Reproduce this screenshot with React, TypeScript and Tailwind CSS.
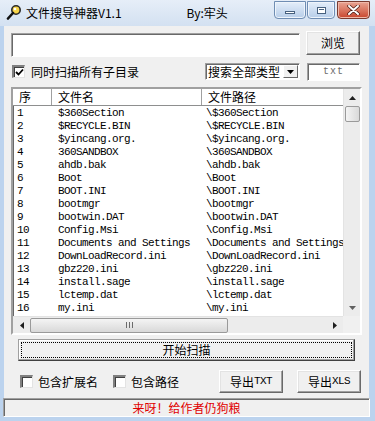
import React from "react";

const CJK = "font-['Microsoft_YaHei','Noto_Sans_CJK_SC',sans-serif]";
const MONO = "font-['Liberation_Mono','Noto_Sans_CJK_SC',monospace]";

const FILES = [
  "$360Section",
  "$RECYCLE.BIN",
  "$yincang.org.",
  "360SANDBOX",
  "ahdb.bak",
  "Boot",
  "BOOT.INI",
  "bootmgr",
  "bootwin.DAT",
  "Config.Msi",
  "Documents and Settings",
  "DownLoadRecord.ini",
  "gbz220.ini",
  "install.sage",
  "lctemp.dat",
  "my.ini",
  "System Volume(2).?",
];

// classic raised 3d button
const Btn = ({ children, className = "" }: { children: React.ReactNode; className?: string }) => (
  <div
    className={`flex items-center justify-center bg-[#f0f0f0] border border-t-white border-l-white border-r-[#696969] border-b-[#696969] shadow-[inset_-1px_-1px_0_#a0a0a0,inset_1px_1px_0_#e3e3e3] text-[12px] text-black ${CJK} ${className}`}
  >
    {children}
  </div>
);

const Check = ({ checked }: { checked?: boolean }) => (
  <div className="w-[13px] h-[13px] bg-white border-t-2 border-l-2 border-b border-r border-t-[#808080] border-l-[#808080] border-b-[#e3e3e3] border-r-[#e3e3e3] shadow-[inset_1px_1px_0_#404040] flex items-center justify-center">
    {checked && (
      <svg width="9" height="9" viewBox="0 0 9 9">
        <path d="M1 4 L3.5 6.5 L8 1.5" stroke="#000" strokeWidth="1.8" fill="none" />
      </svg>
    )}
  </div>
);

const Sunken = ({ children, className = "" }: { children?: React.ReactNode; className?: string }) => (
  <div
    className={`border-t border-l border-b border-r border-t-[#a0a0a0] border-l-[#a0a0a0] border-b-white border-r-white shadow-[inset_1px_1px_0_#696969] ${className}`}
  >
    {children}
  </div>
);

const TitleButtons = () => (
  <div className="ml-auto flex items-start mt-[1px] mr-[5px]">
    <div className="w-[32px] h-[18px] rounded-b-[4px] border border-[#6f8db3] bg-gradient-to-b from-[#e4eefa] to-[#b7cde8] flex items-center justify-center shadow-[inset_0_0_0_1px_#eef4fb]">
      <div className="w-[10px] h-[3px] bg-white border border-[#47617f] mt-[4px]" />
    </div>
    <div className="w-[28px] h-[18px] ml-[1px] rounded-b-[4px] border border-[#6f8db3] bg-gradient-to-b from-[#e4eefa] to-[#b7cde8] flex items-center justify-center shadow-[inset_0_0_0_1px_#eef4fb]">
      <div className="w-[9px] h-[7px] bg-white border border-[#47617f] flex items-center justify-center">
        <div className="w-[5px] h-[3px] border-t border-[#47617f]" />
      </div>
    </div>
    <div className="w-[33px] h-[18px] ml-[2px] rounded-b-[4px] border border-[#7a3b30] bg-gradient-to-b from-[#e8a493] to-[#c8442c] flex items-center justify-center shadow-[inset_0_0_0_1px_#f0b9aa]">
      <svg width="13" height="10" viewBox="0 0 13 10">
        <path d="M2 1 L11 9 M11 1 L2 9" stroke="#4a1a12" strokeWidth="3.4" strokeLinecap="round" />
        <path d="M2 1 L11 9 M11 1 L2 9" stroke="#fff" strokeWidth="2" strokeLinecap="round" />
      </svg>
    </div>
  </div>
);

const ListView = () => (
  <div className="mt-[7px] ml-[7px] w-[351px] h-[249px] border-2 border-t-[#a0a0a0] border-l-[#a0a0a0] border-b-white border-r-white shadow-[inset_1px_1px_0_#696969] bg-white flex flex-col overflow-hidden">
    <div className="flex flex-1 min-h-0">
      <div className="flex-1 overflow-hidden flex flex-col">
        {/* header */}
        <div className={`flex h-[17px] shrink-0 border-b border-[#8e8f8f] bg-white text-[12px] leading-[16px] text-black ${CJK}`}>
          <div className="w-[39px] shrink-0 pl-[6px] border-r border-[#a0a0a0]">序</div>
          <div className="w-[150px] shrink-0 pl-[6px] border-r border-[#a0a0a0]">文件名</div>
          <div className="w-[150px] shrink-0 pl-[6px]">文件路径</div>
        </div>
        <div className={`pt-[1px] text-[11px] tracking-[-0.6px] text-black ${MONO}`}>
          {FILES.map((f, i) => (
            <div key={i} className="flex h-[13px] leading-[13px] whitespace-nowrap">
              <div className="w-[39px] shrink-0 pl-[4px]">{i + 1}</div>
              <div className="w-[150px] shrink-0 pl-[6px]">{f}</div>
              <div className="shrink-0 pl-[4px]">\{f}</div>
            </div>
          ))}
        </div>
      </div>
      {/* vertical scrollbar */}
      <div className="w-[17px] shrink-0 bg-[#ececec] flex flex-col items-center border-l border-[#e3e3e3]">
        <div className="h-[17px] flex items-center justify-center">
          <svg width="7" height="4" viewBox="0 0 7 4"><path d="M0 4 L3.5 0 L7 4 Z" fill="#1e1e1e" /></svg>
        </div>
        <div className="w-[15px] h-[16px] rounded-[2px] border border-[#9a9a9a] bg-gradient-to-r from-[#f4f4f4] to-[#d9d9d9]" />
        <div className="flex-1" />
        <div className="h-[17px] flex items-center justify-center">
          <svg width="7" height="4" viewBox="0 0 7 4"><path d="M0 0 L3.5 4 L7 0 Z" fill="#606060" /></svg>
        </div>
      </div>
    </div>
    {/* horizontal scrollbar */}
    <div className="h-[17px] shrink-0 flex">
      <div className="flex-1 bg-[#ececec] flex items-center border-t border-[#e3e3e3]">
        <div className="w-[17px] flex items-center justify-center">
          <svg width="4" height="7" viewBox="0 0 4 7"><path d="M4 0 L0 3.5 L4 7 Z" fill="#1e1e1e" /></svg>
        </div>
        <div className="w-[198px] h-[15px] rounded-[2px] border border-[#9a9a9a] bg-gradient-to-b from-[#f4f4f4] to-[#d9d9d9] flex items-center justify-center">
          <div className="flex gap-[2px]">
            <div className="w-[1px] h-[6px] bg-[#6b6b6b]" />
            <div className="w-[1px] h-[6px] bg-[#6b6b6b]" />
            <div className="w-[1px] h-[6px] bg-[#6b6b6b]" />
          </div>
        </div>
        <div className="flex-1" />
        <div className="w-[17px] flex items-center justify-center">
          <svg width="4" height="7" viewBox="0 0 4 7"><path d="M0 0 L4 3.5 L0 7 Z" fill="#1e1e1e" /></svg>
        </div>
      </div>
      <div className="w-[17px] bg-[#f0f0f0]" />
    </div>
  </div>
);

export default function App() {
  return (
    <div className="w-[375px] h-[421px] bg-[#bcd3ee] flex flex-col overflow-hidden">
      {/* title bar */}
      <div className={`h-[26px] shrink-0 flex items-start bg-gradient-to-b from-[#e6eef8] to-[#d3e1f1] text-[12px] text-black ${CJK}`}>
        <div className="ml-[6px] mt-[4px] w-[16px] h-[16px]">
          <svg width="16" height="16" viewBox="0 0 16 16">
            <circle cx="10" cy="6" r="4.2" fill="#f7d54a" stroke="#2a2a2a" strokeWidth="1.6" />
            <path d="M7 9 L2 14.5" stroke="#111" strokeWidth="2.6" strokeLinecap="round" />
            <circle cx="9" cy="5" r="1.3" fill="#fff" />
          </svg>
        </div>
        <div className="ml-[4px] mt-[5px] leading-[16px]">文件搜导神器V1.1</div>
        <div className="ml-[65px] mt-[5px] leading-[16px]">By:牢头</div>
        <TitleButtons />
      </div>

      {/* client area */}
      <div className="ml-[4px] w-[365px] h-[391px] shrink-0 bg-[#f0f0f0] flex flex-col">
        <div className="flex items-start pl-[7px] pt-[5px]">
          <Sunken className="mt-[2px] w-[289px] h-[24px] bg-white" />
          <Btn className="ml-[6px] w-[54px] h-[24px]">浏览</Btn>
        </div>

        <div className="flex items-center pl-[8px] mt-[6px] h-[17px]">
          <Check checked />
          <div className={`ml-[6px] text-[12px] text-black ${CJK}`}>同时扫描所有子目录</div>
          <Sunken className="ml-auto w-[95px] h-[17px] bg-white flex items-center">
            <div className={`flex-1 pl-[2px] text-[12px] leading-[15px] text-black ${CJK}`}>搜索全部类型</div>
            <div className="w-[15px] h-[13px] mr-[1px] bg-[#f0f0f0] border border-t-white border-l-white border-r-[#696969] border-b-[#696969] flex items-center justify-center">
              <svg width="7" height="4" viewBox="0 0 7 4"><path d="M0 0 L3.5 4 L7 0 Z" fill="#000" /></svg>
            </div>
          </Sunken>
          <Sunken className="ml-[7px] mr-[9px] w-[53px] h-[18px] bg-white flex items-center justify-center">
            <span className={`text-[10px] text-[#6d6d6d] tracking-[1px] ${MONO}`}>txt</span>
          </Sunken>
        </div>

        <ListView />

        <div className="ml-[14px] mt-[4px] w-[337px] h-[22px] bg-[#f0f0f0] border border-t-[#a0a0a0] border-l-[#a0a0a0] border-r-[#404040] border-b-[#404040] shadow-[inset_-1px_-1px_0_#a0a0a0,inset_1px_1px_0_#fff] flex p-[2px]">
          <div className={`flex-1 border border-dotted border-black flex items-center justify-center text-[12px] text-black ${CJK}`}>开始扫描</div>
        </div>

        <div className="flex items-center mt-[9px] h-[23px]">
          <div className="ml-[16px]"><Check /></div>
          <div className={`ml-[5px] text-[12px] text-black ${CJK}`}>包含扩展名</div>
          <div className="ml-[15px]"><Check /></div>
          <div className={`ml-[5px] text-[12px] text-black ${CJK}`}>包含路径</div>
          <Btn className="ml-auto w-[64px] h-[23px]">
            导出<span className={`${MONO} text-[11px] tracking-[-0.6px]`}>TXT</span>
          </Btn>
          <Btn className="ml-[14px] mr-[8px] w-[64px] h-[23px]">
            导出<span className={`${MONO} text-[11px] tracking-[-0.6px]`}>XLS</span>
          </Btn>
        </div>

        <Sunken className={`mt-[5px] -ml-[1px] w-[367px] h-[19px] bg-[#f0f0f0] flex items-center justify-center text-[12px] text-[#e00000] ${CJK}`}>
          来呀！给作者仍狗粮
        </Sunken>
      </div>
    </div>
  );
}
